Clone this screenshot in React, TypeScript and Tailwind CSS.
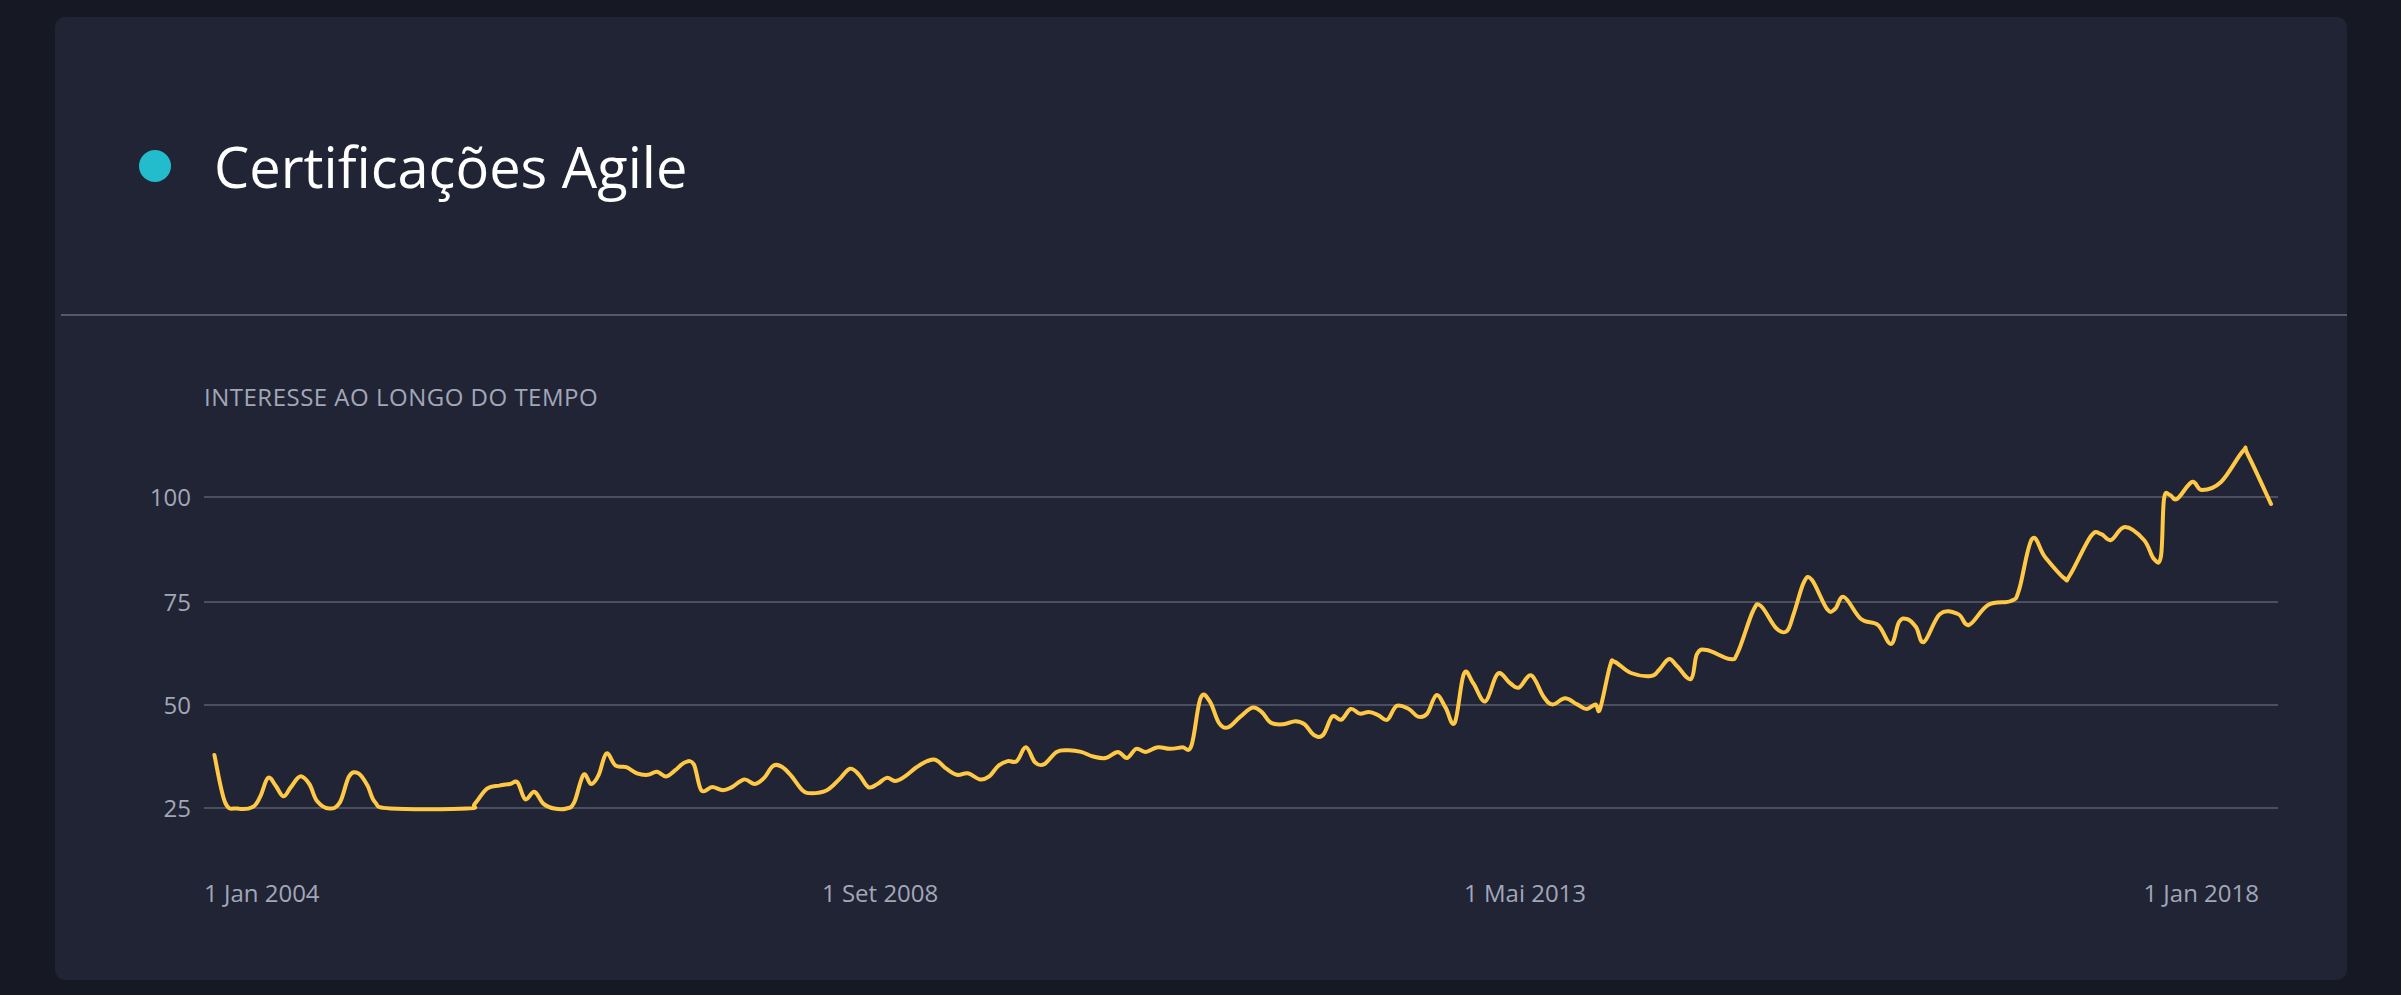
import React from "react";

const S = 1.5313;
const left: [number, number][] = [
[140,493],[147,524],[155,528],[165,527],[170,520],[175,508],[180,513],[185,520],[190,514],[196,507],[202,512],[207,523],[215,528],[222,524],[228,507],[234,505],[240,513],[245,524],[255,528],[305,528],[310,525],[318,515],[326,513],[333,512],[338,511],[343,522],[349,517],[355,525],[362,528],[370,528],[375,524],[381,506],[386,512],[391,506],[396,492],[402,500],[409,501],[416,505],[423,506],[429,504],[435,507],[441,503],[447,498],[453,499],[458,516],[465,514],[472,516],[478,514],[486,509],[493,512],[499,508],[505,500],[511,501],[517,507],[524,516],[530,518],[540,516],[548,509],[555,502],[561,506],[567,514],[573,512],[579,508],[585,510],[591,507],[600,500],[610,496],[618,502],[625,506],[632,505],[640,509],[646,507],[652,500],[658,497],[664,497],[670,488],[676,498],[682,499],[690,491],[698,490],[706,491],[714,494],[722,495],[730,491],[736,495],[742,489],[748,491],[756,488],[764,489],[772,488],[778,487],[784,456],[790,458],[796,472],[802,475],[810,468],[818,462],[824,465],[830,472],[838,473],[846,471],[852,473],[858,480],[864,480],[870,468],[876,470],[882,463],[888,466],[894,465],[900,467],[906,470],[912,461],[920,463],[926,468],[932,466],[938,454],[944,462],[950,472],[956,440],[962,446],[970,458],[978,440],[986,446],[992,449],[1000,441],[1008,455],[1014,460],[1022,456],[1030,460],[1036,463],[1042,460]];
const right: [number, number][] = [
[1600,709],[1610,666],[1615,662],[1631,673],[1651,676],[1659,670],[1669,659],[1677,666],[1691,679],[1697,654],[1707,650],[1730,659],[1738,652],[1753,611],[1761,606],[1776,628],[1787,631],[1794,613],[1804,582],[1812,580],[1827,609],[1835,609],[1844,597],[1861,619],[1878,625],[1891,644],[1899,622],[1907,619],[1916,627],[1924,642],[1940,614],[1958,614],[1969,625],[1988,605],[2011,601],[2019,590],[2032,539],[2045,557],[2064,578],[2070,575],[2091,536],[2101,534],[2111,540],[2125,527],[2144,540],[2154,559],[2161,556],[2164,499],[2170,495],[2177,499],[2192,482],[2202,490],[2221,482],[2243,451],[2248,455],[2271,504]];
const pts: [number, number][] = [...left.map(([x, y]) => [x * S, y * S] as [number, number]), ...right];

function smooth(p: [number, number][]) {
  let d = `M${p[0][0]},${p[0][1]}`;
  for (let i = 0; i < p.length - 1; i++) {
    const p0 = p[i - 1] || p[i], p1 = p[i], p2 = p[i + 1], p3 = p[i + 2] || p2;
    const t = 0.18;
    const c1 = [p1[0] + (p2[0] - p0[0]) * t, p1[1] + (p2[1] - p0[1]) * t];
    const c2 = [p2[0] - (p3[0] - p1[0]) * t, p2[1] - (p3[1] - p1[1]) * t];
    d += ` C${c1[0].toFixed(1)},${c1[1].toFixed(1)} ${c2[0].toFixed(1)},${c2[1].toFixed(1)} ${p2[0].toFixed(1)},${p2[1].toFixed(1)}`;
  }
  return d;
}

const grid = [
  { v: "100", y: 497 },
  { v: "75", y: 602 },
  { v: "50", y: 705 },
  { v: "25", y: 808 },
];

export default function App() {
  return (
    <div className="w-[2401px] h-[995px] bg-[#161923] pt-[17px] pl-[55px]" style={{ fontFamily: '"Open Sans", "Noto Sans", sans-serif' }}>
      <div className="w-[2292px] h-[963px] bg-[#212435] rounded-[10px] flex flex-col overflow-hidden">
        <div className="h-[297px] flex items-center pl-[84px]">
          <div className="w-[32px] h-[32px] rounded-full bg-[#22bccd]" />
          <div className="ml-[43px] text-white text-[56px] leading-none">Certificações Agile</div>
        </div>
        <div className="ml-[6px] h-[2px] bg-[#555a6b]" />
        <div className="relative flex-1">
          <svg className="absolute inset-0" width="2292" height="664" viewBox="55 316 2292 664">
            {grid.map((g) => (
              <line key={g.v} x1="204" x2="2278" y1={g.y} y2={g.y} stroke="#4b4f60" strokeWidth="2" />
            ))}
            <path d={smooth(pts)} fill="none" stroke="#ffc845" strokeWidth="4" strokeLinejoin="round" strokeLinecap="round" />
          </svg>
          <div className="absolute left-[149px] top-[67px] text-[24px] leading-[28px] text-[#a2a7b8] tracking-[0.5px]">INTERESSE AO LONGO DO TEMPO</div>
          {grid.map((g) => (
            <div key={g.v} className="absolute left-0 w-[136px] text-right text-[24px] leading-[28px] text-[#a2a7b8]" style={{ top: g.y - 316 - 14 }}>{g.v}</div>
          ))}
          <div className="absolute top-[563px] left-[149px] text-[24px] leading-[28px] text-[#a2a7b8]">1 Jan 2004</div>
          <div className="absolute top-[563px] left-[767px] text-[24px] leading-[28px] text-[#a2a7b8]">1 Set 2008</div>
          <div className="absolute top-[563px] left-[1409px] text-[24px] leading-[28px] text-[#a2a7b8]">1 Mai 2013</div>
          <div className="absolute top-[563px] left-[2204px] -translate-x-full text-[24px] leading-[28px] text-[#a2a7b8] whitespace-nowrap">1 Jan 2018</div>
        </div>
      </div>
    </div>
  );
}
